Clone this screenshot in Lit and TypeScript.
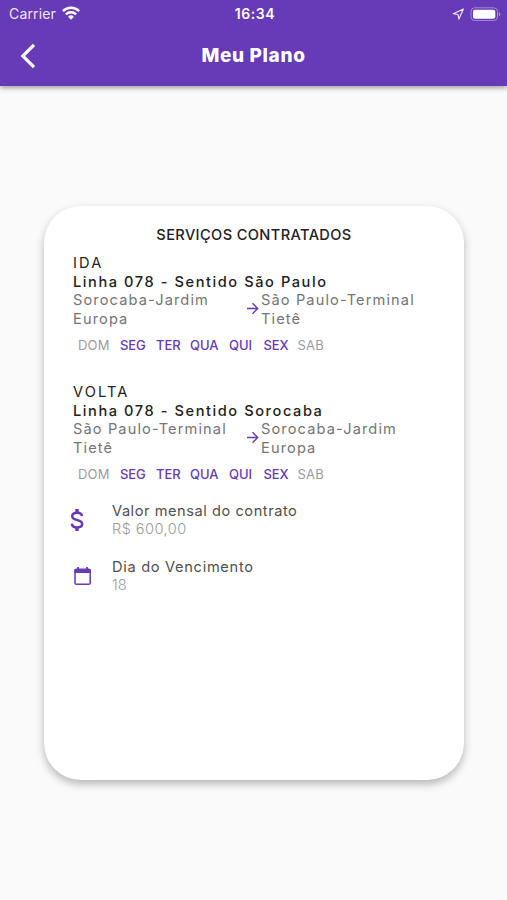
import { LitElement, html, css } from "lit";
import { customElement, property } from "lit/decorators.js";
import { classMap } from "lit/directives/class-map.js";

const DAYS = ["DOM", "SEG", "TER", "QUA", "QUI", "SEX", "SAB"];
const ACTIVE = new Set(["SEG", "TER", "QUA", "QUI", "SEX"]);

@customElement("status-bar")
class StatusBar extends LitElement {
  static styles = css`
    :host { display: grid; grid-template-columns: 1fr auto 1fr; align-items: center; height: 28px; padding: 0 6px 0 9px; color: #fff; font: 400 14px/28px Inter, sans-serif; }
    .left, .right { display: flex; align-items: center; }
    .left { gap: 6px; color: #eee6fa; }
    .right { justify-content: flex-end; gap: 5px; }
    .carrier { letter-spacing: 0.15px; }
    .time { font-weight: 600; font-size: 14px; letter-spacing: 0.6px; }
    .left svg { margin-top: -2px; }
    .right svg { margin-top: -1px; }
    svg { display: block; }
  `;
  render() {
    return html`
      <div class="left"><span class="carrier">Carrier</span>
        <svg width="18" height="14" viewBox="0 0 18 14" fill="none" stroke="#fff" stroke-width="2.4">
          <path d="M0.9 5.1a11.5 11.5 0 0 1 16.2 0M3.9 8.3a7.2 7.2 0 0 1 10.2 0" />
          <path d="M9 13.7L6.1 10.8a4.1 4.1 0 0 1 5.8 0z" fill="#fff" stroke="none" />
        </svg>
      </div>
      <span class="time">16:34</span>
      <div class="right">
        <svg width="13" height="12" viewBox="0 0 13 12" fill="none" stroke="#eee6fa" stroke-width="1.2" stroke-linejoin="round"><path d="M11.4 1L1.3 5.7l4.7.8.9 4.6z" /></svg>
        <svg width="31" height="14" viewBox="0 0 31 14">
          <rect x="1" y=".8" width="26.5" height="12.8" rx="3.8" fill="none" stroke="#a78ad6" />
          <rect x="3" y="2.7" width="22.3" height="9" rx="2" fill="#fff" />
          <path d="M28.8 5v4.4q1.6-.7 1.6-2.2T28.8 5z" fill="#a78ad6" />
        </svg>
      </div>`;
  }
}

@customElement("service-route")
class ServiceRoute extends LitElement {
  @property() label = "";
  @property() line = "";
  @property({ type: Array }) from: string[] = [];
  @property({ type: Array }) to: string[] = [];
  static styles = css`
    :host { display: block; font: 400 14.6px/18.4px Inter, sans-serif; }
    .label { color: #222; letter-spacing: 2.1px; }
    .line { color: #222; font-weight: 450; letter-spacing: 1.57px; white-space: nowrap; }
    .route { display: grid; grid-template-columns: 173px 15px 1fr; align-items: center; color: #757575; letter-spacing: 1.12px; white-space: nowrap; }
    .days { display: grid; grid-template-columns: 42px 36px 34px 39px 34.5px 34px 30px; margin: 8px 0 0 5px; font-size: 13px; color: #9c9c9c; letter-spacing: 0.2px; }
    .on { color: #673ab7; font-weight: 500; letter-spacing: -0.1px; }
    svg { display: block; margin-top: -2px; }
  `;
  render() {
    return html`
      <div class="label">${this.label}</div>
      <div class="line">${this.line}</div>
      <div class="route">
        <div>${this.from.map((t) => html`<div>${t}</div>`)}</div>
        <svg width="13" height="13" viewBox="0 0 13 13" fill="none" stroke="#673ab7" stroke-width="1.4"><path d="M1 6.5h10.5M6.5 1.2l5.2 5.3-5.2 5.3" /></svg>
        <div>${this.to.map((t) => html`<div>${t}</div>`)}</div>
      </div>
      <div class="days">${DAYS.map((d) => html`<span class=${classMap({ on: ACTIVE.has(d) })}>${d}</span>`)}</div>`;
  }
}

@customElement("app-root")
class AppRoot extends LitElement {
  static styles = css`
    :host { display: flex; flex-direction: column; height: 900px; background: #fafafa; font-family: Inter, sans-serif; }
    header { height: 86px; background: #673ab7; box-shadow: 0 2px 5px rgba(0, 0, 0, 0.36); }
    .bar { display: grid; grid-template-columns: 60px 1fr 60px; align-items: center; height: 56px; color: #fff; }
    .back { display: block; margin-left: 19px; }
    h1 { margin: 0; text-align: center; font-size: 19px; line-height: 24px; font-weight: 850; letter-spacing: 0.65px; }
    main { box-sizing: border-box; width: 420px; height: 574px; margin: 120px 0 0 44px; padding: 20px 29px 0; border-radius: 37px; background: #fff; box-shadow: 0 4px 8px rgba(0, 0, 0, 0.28); }
    h2 { margin: 0 0 9.4px; text-align: center; font-size: 14.6px; line-height: 19px; font-weight: 450; color: #222; letter-spacing: 0.38px; white-space: nowrap; }
    .second { margin-top: 29px; }
    .info { display: grid; grid-template-columns: 39px 1fr; align-items: center; font-size: 14.6px; line-height: 18.4px; color: #505050; }
    .money { margin-top: 18.6px; }
    .due { margin-top: 19.2px; }
    .value { color: #9b9b9b; font-weight: 300; }
    .amount { letter-spacing: 0.42px; }
    .info svg { display: block; }
    .money svg { margin-left: -3px; }
    .name { letter-spacing: 0.55px; white-space: nowrap; }
    .due .name { letter-spacing: 0.7px; }
  `;
  render() {
    return html`
      <header>
        <status-bar></status-bar>
        <div class="bar">
          <svg class="back" width="18" height="26" viewBox="0 0 18 26" fill="none" stroke="#fff" stroke-width="3.2"><path d="M15 1.8L3.8 13 15 24.2" /></svg>
          <h1>Meu Plano</h1>
        </div>
      </header>
      <main>
        <h2>SERVIÇOS CONTRATADOS</h2>
        <service-route label="IDA" line="Linha 078 - Sentido São Paulo" .from=${["Sorocaba-Jardim", "Europa"]} .to=${["São Paulo-Terminal", "Tietê"]}></service-route>
        <service-route class="second" label="VOLTA" line="Linha 078 - Sentido Sorocaba" .from=${["São Paulo-Terminal", "Tietê"]} .to=${["Sorocaba-Jardim", "Europa"]}></service-route>
        <div class="info money">
          <svg width="14" height="24" viewBox="0 0 14 24" fill="none" stroke="#673ab7" stroke-width="2.5"><path d="M12 8.2C11.8 6 10 4.8 7.2 4.8S2.2 6 2.2 8.3c0 2.1 1.6 2.9 4.8 3.7s5.2 1.7 5.2 4c0 2.2-1.9 3.4-5 3.4-3.4 0-5.2-1.5-5.4-3.8" /><path d="M7 1v4M7 19v4" stroke-width="3.4" /></svg>
          <div><div class="name">Valor mensal do contrato</div><div class="value amount">R$ 600,00</div></div>
        </div>
        <div class="info due">
          <svg width="19" height="20" viewBox="0 0 19 20"><path d="M5 1v3M14 1v3" stroke="#673ab7" stroke-width="1.8" /><rect x="2" y="3.2" width="15.2" height="15" rx="1.3" fill="none" stroke="#673ab7" stroke-width="1.5" /><path d="M1.5 3h16.2v4H1.5z" fill="#673ab7" /></svg>
          <div><div class="name">Dia do Vencimento</div><div class="value">18</div></div>
        </div>
      </main>`;
  }
}
